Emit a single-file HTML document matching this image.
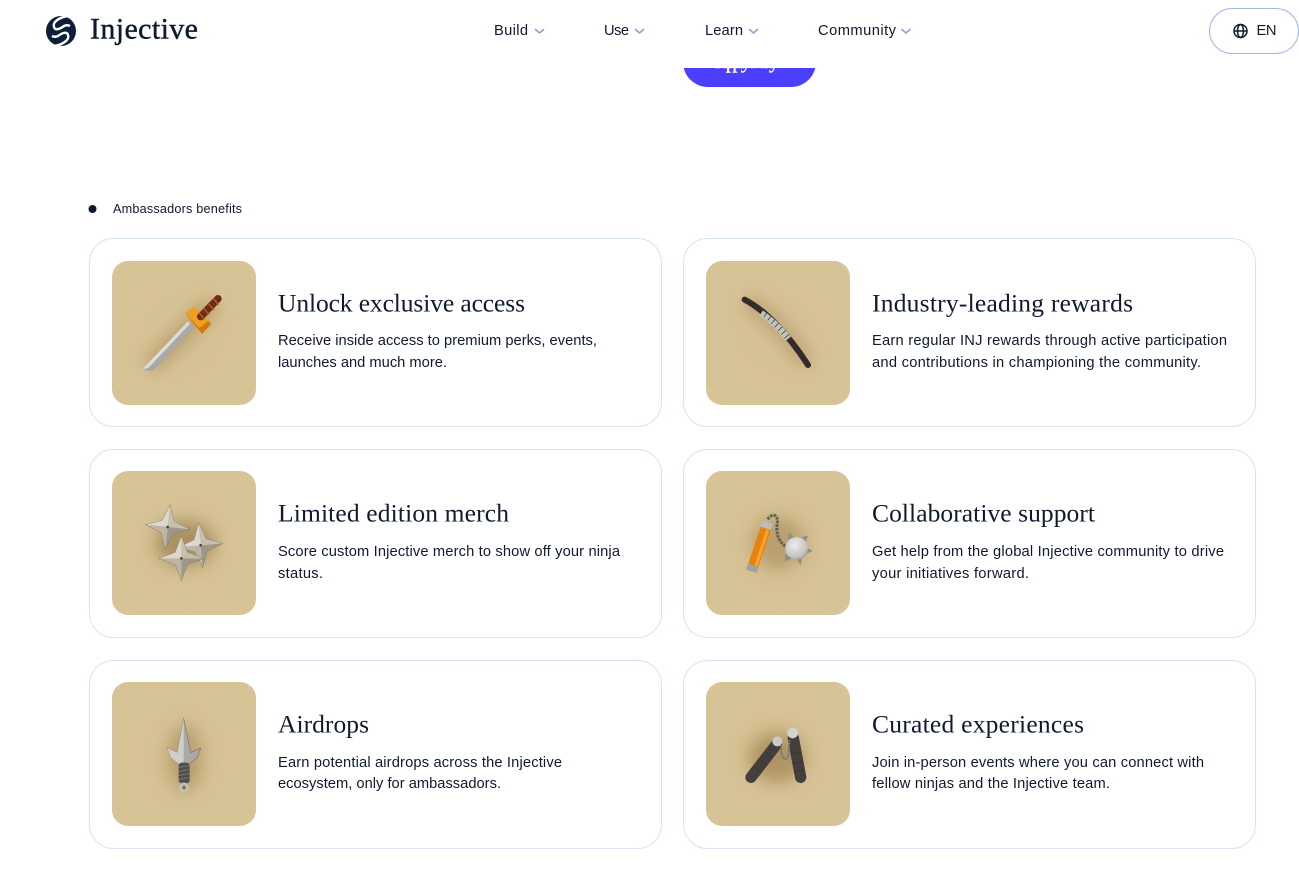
<!DOCTYPE html>
<html lang="en">
<head>
<meta charset="utf-8">
<title>Injective Ambassadors</title>
<style>
html,body{margin:0;padding:0;background:#fff;width:1299px;height:873px;overflow:hidden}
svg{display:block}
.nav{font:14.7px "Liberation Sans",sans-serif;fill:#0f1a2e}
.t{font:25.5px "Liberation Serif",serif;fill:#0f1a2e}
.b{font:14.7px "Liberation Sans",sans-serif;fill:#0f1a2e}
.card{fill:#fff;stroke:#d9e3f1;stroke-width:1}
.chev{fill:none;stroke:#8ea3d8;stroke-width:1.7;stroke-linecap:round;stroke-linejoin:round}
</style>
</head>
<body>
<svg width="1299" height="873" viewBox="0 0 1299 873" xmlns="http://www.w3.org/2000/svg">
<defs>
<filter id="sh" x="-80%" y="-80%" width="260%" height="260%"><feGaussianBlur stdDeviation="24"/></filter>
<linearGradient id="bld" x1="0" y1="0" x2="1" y2="1"><stop offset="0" stop-color="#c4c4c0"/><stop offset="1" stop-color="#94948f"/></linearGradient>
<radialGradient id="ball" cx=".42" cy=".35" r=".75"><stop offset="0" stop-color="#ededeb"/><stop offset=".7" stop-color="#c4c4c1"/><stop offset="1" stop-color="#8d8d8a"/></radialGradient>
<radialGradient id="tg" cx=".5" cy=".5" r=".75"><stop offset="0" stop-color="#d4c093"/><stop offset="1" stop-color="#d8c597"/></radialGradient>
<g id="tile"><rect x="36" y="33" width="432" height="432" rx="48" fill="url(#tg)"/></g>
<g id="s4">
<path d="M0-66 18-18 66 0 18 18 0 66-18 18-66 0-18-18Z" fill="#d4cdbf" stroke="#77705f" stroke-width="2"/>
<path d="M0-66 0 0-66 0-18-18Z" fill="#ded8ca"/>
<path d="M0-66 18-18 66 0 0 0Z" fill="#c6beae"/>
<path d="M66 0 18 18 0 66 0 0Z" fill="#a0978a"/>
<path d="M0 66-18 18-66 0 0 0Z" fill="#bcb4a5"/>
<circle r="4" fill="#4a443c"/>
</g>
</defs>

<rect width="1299" height="873" fill="#fff"/>

<!-- apply button -->
<rect x="683" y="37" width="133" height="50" rx="25" fill="#4c3ffb"/>
<text x="715" y="68" font-family="Liberation Serif,serif" font-size="20" fill="#fff" stroke="#fff" stroke-width=".4" textLength="64">Apply today</text>

<!-- header -->
<rect width="1299" height="68" fill="#fff"/>
<g transform="translate(46 16)">
<circle cx="15" cy="15" r="15" fill="#0f1f3a"/>
<path d="M22 0C14 1 6 6 8 11 9 15 14 13 18 10 20 9 22 9 24 10" fill="none" stroke="#fff" stroke-width="2.400"/>
<path d="M8 30C16 29 24 24 22 19 21 15 16 17 12 20 10 21 8 21 6 20" fill="none" stroke="#fff" stroke-width="2.400"/>
</g>
<text x="90" y="38.5" font-family="Liberation Serif,serif" font-size="30" fill="#0f1a2e" stroke="#0f1a2e" stroke-width=".4" textLength="108">Injective</text>

<text class="nav" x="494" y="35" textLength="34">Build</text>
<path class="chev" d="M535.500 29.500 539.500 33 543.500 29.500"/>
<text class="nav" x="604" y="35" textLength="25">Use</text>
<path class="chev" d="M635.500 29.500 639.500 33 643.500 29.500"/>
<text class="nav" x="705" y="35" textLength="38">Learn</text>
<path class="chev" d="M749.500 29.500 753.500 33 757.500 29.500"/>
<text class="nav" x="818" y="35" textLength="78">Community</text>
<path class="chev" d="M902 29.500 906 33 910 29.500"/>

<rect x="1209.500" y="8.500" width="89" height="45" rx="22.500" fill="#fff" stroke="#a6b6e2"/>
<g fill="none" stroke="#0f1a2e" stroke-width="1.500">
<circle cx="1240.500" cy="31" r="6.500"/><ellipse cx="1240.500" cy="31" rx="3" ry="6.500"/><path d="M1234 31H1247"/>
</g>
<text class="nav" x="1256.500" y="35" textLength="20" fill="#1d2738">EN</text>

<!-- section label -->
<circle cx="92.500" cy="209" r="4" fill="#0f1a2e"/>
<text x="113" y="213" font-family="Liberation Sans,sans-serif" font-size="12.700" fill="#0f1a2e" textLength="129">Ambassadors benefits</text>

<!-- cards -->
<rect class="card" x="89.500" y="238.500" width="572" height="188" rx="24"/>
<rect class="card" x="683.500" y="238.500" width="572" height="188" rx="24"/>
<rect class="card" x="89.500" y="449.500" width="572" height="188" rx="24"/>
<rect class="card" x="683.500" y="449.500" width="572" height="188" rx="24"/>
<rect class="card" x="89.500" y="660.500" width="572" height="188" rx="24"/>
<rect class="card" x="683.500" y="660.500" width="572" height="188" rx="24"/>

<!-- sword -->
<g transform="translate(100 250) scale(.33333)">
<use href="#tile"/>
<path d="M150 350 340 160" stroke="#a07f4c" stroke-width="50" opacity=".55" filter="url(#sh)"/>
<path d="M125 360 158 363 282 234 264 214Z" fill="url(#bld)"/>
<path d="M125 360 264 214 270 221 146 353Z" fill="#dcdcd8"/>
<path d="M256 190 282 170 334 222 306 252Z" fill="#d07a0c"/>
<path d="M256 190 282 170 326 212 298 234Z" fill="#f0a020"/>
<path d="M302 200 354 146" stroke="#6f2c17" stroke-width="22" stroke-linecap="round"/>
<path d="M298 190 314 208M312 176 328 194M326 162 342 180M340 146 356 164" stroke="#b8602a" stroke-width="4"/>
</g>

<!-- staff -->
<g transform="translate(695 250) scale(.33333)">
<use href="#tile" transform="translate(-3 0)"/>
<path d="M155 155C215 185 280 255 335 340" fill="none" stroke="#a07f4c" stroke-width="40" opacity=".55" filter="url(#sh)"/>
<path d="M149 149C205 178 275 245 339 345" fill="none" stroke="#322c2a" stroke-width="18" stroke-linecap="round"/>
<path d="M198 190C225 207 255 235 280 266" fill="none" stroke="#bfc3bd" stroke-width="20" stroke-dasharray="13 2"/>
</g>

<!-- shuriken -->
<g transform="translate(100 460) scale(.33333)">
<use href="#tile"/>
<ellipse cx="255" cy="250" rx="90" ry="70" fill="#8a6a36" opacity=".55" filter="url(#sh)"/>
<use href="#s4" transform="translate(203 201) rotate(6)"/>
<use href="#s4" transform="translate(302 256) rotate(-5)"/>
<use href="#s4" transform="translate(244 295)"/>
</g>

<!-- flail -->
<g transform="translate(695 460) scale(.33333)">
<use href="#tile" transform="translate(-3 0)"/>
<ellipse cx="250" cy="250" rx="80" ry="80" fill="#a07f4c" opacity=".5" filter="url(#sh)"/>
<path d="M172 325 216 195" stroke="#e8820f" stroke-width="32"/>
<path d="M183 318 218 210" stroke="#f5a530" stroke-width="9"/>
<path d="M169 334 175 316" stroke="#a2a29f" stroke-width="34"/>
<path d="M212 205 218 187" stroke="#bcbcb9" stroke-width="32"/>
<path d="M218 178C230 160 250 160 247 190 242 220 250 245 275 262" fill="none" stroke="#5f5f5c" stroke-width="9" stroke-dasharray="8 3"/>
<path d="M278 240 284 218 298 234ZM320 232 340 226 330 248ZM332 262 354 273 332 282ZM300 292 318 316 320 292ZM272 282 268 304 290 296Z" fill="#8e8e8a"/>
<circle cx="305" cy="265" r="34" fill="url(#ball)"/>
</g>

<!-- kunai -->
<g transform="translate(100 670) scale(.33333)">
<use href="#tile" transform="translate(0 3)"/>
<ellipse cx="255" cy="265" rx="50" ry="100" fill="#a07f4c" opacity=".55" filter="url(#sh)"/>
<path d="M251 145 272 248 302 234 292 262 268 282H236L212 262 202 234 232 248Z" fill="#a9a9a5" stroke="#77756f" stroke-width="2"/>
<path d="M251 145 251 282 236 282 212 262 202 234 232 248Z" fill="#cfcfca"/>
<rect x="236" y="278" width="33" height="62" rx="10" fill="#4f4f4f"/>
<path d="M237 292 268 287M237 304 268 299M237 316 268 311M237 328 268 323" stroke="#777775" stroke-width="3"/>
<circle cx="252" cy="353" r="12" fill="none" stroke="#c0c0ba" stroke-width="7"/>
<circle cx="252" cy="353" r="4" fill="#54504a"/>
</g>

<!-- nunchaku -->
<g transform="translate(695 670) scale(.33333)">
<use href="#tile" transform="translate(-3 3)"/>
<ellipse cx="245" cy="262" rx="85" ry="75" fill="#8a6a36" opacity=".5" filter="url(#sh)"/>
<path d="M168 322 244 224" stroke="#443e3c" stroke-width="34" stroke-linecap="round"/>
<path d="M295 205 317 322" stroke="#443e3c" stroke-width="34" stroke-linecap="round"/>
<path d="M180 292 200 308M197 270 217 286M214 248 234 264M289 252 319 247M293 280 323 275M297 304 327 299" stroke="#37312f" stroke-width="2"/>
<circle cx="247" cy="214" r="15" fill="#c9cbc9"/>
<circle cx="293" cy="189" r="16" fill="#d2d4d2"/>
<path d="M258 226C258 250 262 265 272 268 282 268 281 240 283 210" fill="none" stroke="#7a7a76" stroke-width="6" stroke-dasharray="6 2"/>
</g>

<!-- text -->
<text class="t" x="278" y="311.500" textLength="247">Unlock exclusive access</text>
<text class="b" x="278" y="345" textLength="319">Receive inside access to premium perks, events,</text>
<text class="b" x="278" y="367" textLength="169">launches and much more.</text>

<text class="t" x="872" y="311.500" textLength="261">Industry-leading rewards</text>
<text class="b" x="872" y="345" textLength="355">Earn regular INJ rewards through active participation</text>
<text class="b" x="872" y="367" textLength="329">and contributions in championing the community.</text>

<text class="t" x="278" y="521.500" textLength="231">Limited edition merch</text>
<text class="b" x="278" y="556" textLength="342">Score custom Injective merch to show off your ninja</text>
<text class="b" x="278" y="578" textLength="45">status.</text>

<text class="t" x="872" y="521.500" textLength="223">Collaborative support</text>
<text class="b" x="872" y="556" textLength="352">Get help from the global Injective community to drive</text>
<text class="b" x="872" y="578" textLength="157">your initiatives forward.</text>

<text class="t" x="278" y="732.500" textLength="91">Airdrops</text>
<text class="b" x="278" y="767" textLength="284">Earn potential airdrops across the Injective</text>
<text class="b" x="278" y="788" textLength="223">ecosystem, only for ambassadors.</text>

<text class="t" x="872" y="732.500" textLength="212">Curated experiences</text>
<text class="b" x="872" y="767" textLength="332">Join in-person events where you can connect with</text>
<text class="b" x="872" y="788" textLength="238">fellow ninjas and the Injective team.</text>
</svg>
</body>
</html>
